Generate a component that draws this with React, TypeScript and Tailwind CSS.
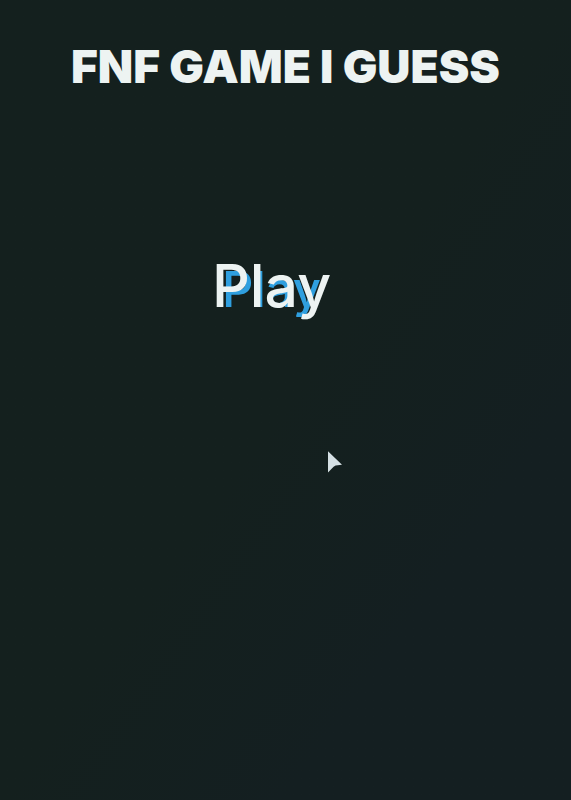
import React from 'react';

const Cursor: React.FC = () => (
   <svg
      viewBox="0 0 15 22"
      className="absolute left-[327px] top-[451px] w-[15px] h-[22px]"
      fill="#d5e0e4"
      aria-hidden="true"
   >
      <path d="M1 0.3 L15 13.8 L8.6 14.6 L6.6 15.8 L1 21.5 Z" />
   </svg>
);

const App: React.FC = () => {
   return (
      <main className="relative flex flex-col items-center min-h-screen pt-[42px] bg-linear-to-br from-[#14201e] from-50% to-[#141f21] to-75% font-['Inter',sans-serif] text-[#edf3f2]">
         <h1 className="font-black text-[46px] leading-[48px] whitespace-nowrap">
            FNF GAME I GUESS
         </h1>
         {/* the smaller blue copy shares the cell and the baseline of the label */}
         <button
            type="button"
            className="grid items-baseline justify-items-center mt-41 mr-7 font-medium leading-[64px] cursor-pointer before:content-['Play'] before:col-start-1 before:row-start-1 before:text-[49px] before:text-[#2f9fdf]"
         >
            <span className="relative col-start-1 row-start-1 text-[59px]">Play</span>
         </button>
         <Cursor />
      </main>
   );
};

export default App;
